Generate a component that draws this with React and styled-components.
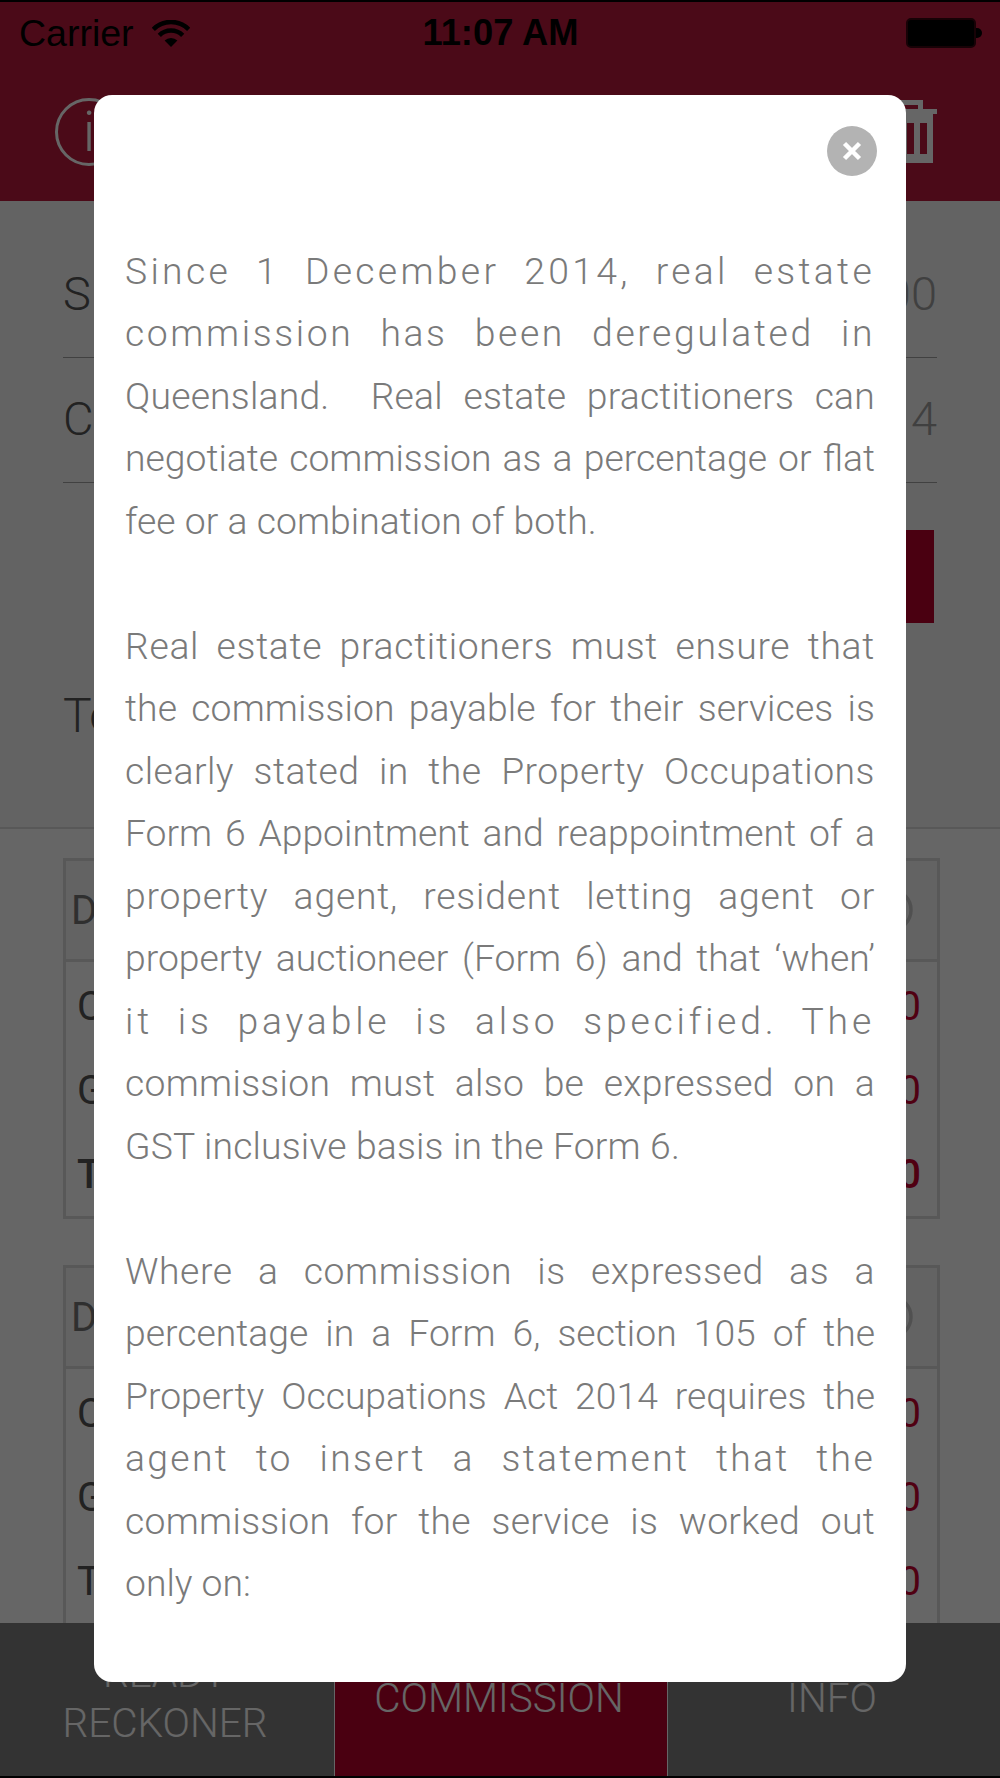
import styled, { createGlobalStyle } from 'styled-components';

const paragraphs = [
    [
        ['Since 1 December 2014, real estate', 3.3],
        ['commission has been deregulated in', 2.6],
        ['Queensland.  Real estate practitioners can', 0.2],
        ['negotiate commission as a percentage or flat', 0],
        ['fee or a combination of both.', 0.05, true],
    ],
    [
        ['Real estate practitioners must ensure that', 0.7],
        ['the commission payable for their services is', 0.1],
        ['clearly stated in the Property Occupations', 0.5],
        ['Form 6 Appointment and reappointment of a', 0],
        ['property agent, resident letting agent or', 0.8],
        ['property auctioneer (Form 6) and that ‘when’', 0],
        ['it is payable is also specified. The', 3.8],
        ['commission must also be expressed on a', 0.3],
        ['GST inclusive basis in the Form 6.', 0.17, true],
    ],
    [
        ['Where a commission is expressed as a', 0.6],
        ['percentage in a Form 6, section 105 of the', 0],
        ['Property Occupations Act 2014 requires the', 0],
        ['agent to insert a statement that the', 2.3],
        ['commission for the service is worked out', 0.3],
        ['only on:', 0, true],
    ],
];

const tableRows = [
    { label: 'C', value: '0' },
    { label: 'G', value: '0' },
    { label: 'T', value: '0', total: true },
];

export default function App() {
    return (
        <Screen>
            <GlobalStyle />
            <Header>
                <StatusBar>
                    <Carrier>
                        Carrier
                        <WifiIcon />
                    </Carrier>
                    <Clock>11:07 AM</Clock>
                    <Battery>
                        <BatteryCell />
                        <BatteryNub />
                    </Battery>
                </StatusBar>
                <Toolbar>
                    <InfoButton>i</InfoButton>
                    <TrashIcon />
                </Toolbar>
            </Header>
            <Content>
                <Form>
                    <FormRow>
                        <span>S</span>
                        <FormValue>00</FormValue>
                    </FormRow>
                    <FormRow>
                        <span>C</span>
                        <FormValue>4</FormValue>
                    </FormRow>
                    <SubmitButton />
                    <TotalRow>To</TotalRow>
                </Form>
                <Results>
                    <CostTable strongTotal />
                    <CostTable />
                </Results>
            </Content>
            <TabBar>
                <Tab>READY<br />RECKONER</Tab>
                <Tab $active>COMMISSION</Tab>
                <Tab>INFO</Tab>
            </TabBar>
            <Overlay>
                <Modal>
                    <CloseButton>
                        <svg width="20" height="20" viewBox="0 0 20 20">
                            <path d="M2.5 2.5 17.5 17.5M17.5 2.5 2.5 17.5" stroke="#fff" strokeWidth="4.5" />
                        </svg>
                    </CloseButton>
                    {paragraphs.map((lines, i) => (
                        <Paragraph key={i}>
                            {lines.map(([text, track, last]) => (
                                <Line key={text} $track={track} $last={last}>{text}</Line>
                            ))}
                        </Paragraph>
                    ))}
                </Modal>
            </Overlay>
        </Screen>
    );
}

function CostTable({ strongTotal }) {
    return (
        <Table>
            <TableHead>
                <span>D</span>
                <HeadRing />
            </TableHead>
            <TableBody>
                {tableRows.map((row) => (
                    <TableRow key={row.label} $strong={strongTotal && row.total}>
                        <span>{row.label}</span>
                        <RowValue>{row.value}</RowValue>
                    </TableRow>
                ))}
            </TableBody>
        </Table>
    );
}

function WifiIcon() {
    return (
        <WifiSvg width="38" height="27" viewBox="0 0 38 27">
            <path d="M1.3 9.3A25 25 0 0 1 36.7 9.3" fill="none" stroke="#000" strokeWidth="4.5" />
            <path d="M7.3 15.3A16.5 16.5 0 0 1 30.7 15.3" fill="none" stroke="#000" strokeWidth="4.5" />
            <path d="M19 27 12.6 20.6A9 9 0 0 1 25.4 20.6Z" fill="#000" />
        </WifiSvg>
    );
}

function TrashIcon() {
    return (
        <TrashSvg width="66" height="63" viewBox="0 0 66 63">
            <path
                fillRule="evenodd"
                fill="#fff"
                d="M14 0H52V9H66V14H62V63H4V14H0V9H14ZM19 5V9H47V5ZM10 23V54H17V23ZM23 23V54H30V23ZM36 23V54H43V23ZM49 23V54H56V23Z"
            />
        </TrashSvg>
    );
}

function HeadRing() {
    return (
        <svg width="44" height="44" viewBox="0 0 44 44">
            <circle cx="22" cy="22" r="20" fill="none" stroke="#c8c8c8" strokeWidth="3.5" />
        </svg>
    );
}

const GlobalStyle = createGlobalStyle`
    html, body {
        margin: 0;
        padding: 0;
        background: #000;
    }
`;

const Screen = styled.div`
    position: relative;
    display: flex;
    flex-direction: column;
    box-sizing: border-box;
    width: 1000px;
    height: 1778px;
    overflow: hidden;
    border-top: 2px solid #000;
    border-bottom: 2px solid #000;
    background: #fff;
    font-family: Roboto, "Liberation Sans", sans-serif;
`;

const Header = styled.header`
    flex: none;
    height: 199px;
    background: #bb1a3c;
`;

const StatusBar = styled.div`
    display: flex;
    align-items: center;
    justify-content: space-between;
    height: 62px;
    padding: 0 18px 0 19px;
    color: #000;
    font-family: "Liberation Sans", Arial, sans-serif;
`;

const Carrier = styled.div`
    display: flex;
    align-items: center;
    width: 240px;
    font-size: 37.5px;
`;

const WifiSvg = styled.svg`
    margin-left: 18px;
`;

const Clock = styled.div`
    font-size: 36.3px;
    font-weight: 700;
`;

const Battery = styled.div`
    display: flex;
    align-items: center;
    justify-content: flex-end;
    width: 240px;
`;

const BatteryCell = styled.div`
    box-sizing: border-box;
    width: 70px;
    height: 30px;
    border: 2px solid #3a0611;
    border-radius: 5px;
    background: #000;
`;

const BatteryNub = styled.div`
    width: 6px;
    height: 10px;
    border-radius: 0 5px 5px 0;
    background: #000;
`;

const Toolbar = styled.div`
    display: flex;
    align-items: center;
    justify-content: space-between;
    height: 135px;
    padding: 0 63px 0 55px;
`;

const InfoButton = styled.div`
    display: flex;
    align-items: center;
    justify-content: center;
    box-sizing: border-box;
    width: 68px;
    height: 68px;
    border: 3px solid #fff;
    border-radius: 50%;
    color: #fff;
    font-size: 56px;
    font-weight: 300;
`;

const TrashSvg = styled.svg`
    display: block;
`;

const Content = styled.main`
    flex: 1;
    min-height: 0;
    overflow: hidden;
`;

const Form = styled.section`
    display: flex;
    flex-direction: column;
    box-sizing: border-box;
    height: 628px;
    padding: 32px 63px 0;
    border-bottom: 2px solid #dcdcdc;
    background: #f8f8f8;
    color: #555;
    font-weight: 300;
`;

const FormRow = styled.div`
    display: flex;
    align-items: center;
    justify-content: space-between;
    box-sizing: border-box;
    height: 125px;
    padding-bottom: 3px;
    border-bottom: 1px solid #a4a4a4;
    font-size: 47px;
`;

const FormValue = styled.span`
    color: #a0a0a0;
`;

const SubmitButton = styled.div`
    align-self: flex-end;
    width: 500px;
    height: 93px;
    margin: 47px 3px 0 0;
    background: #b9002b;
`;

const TotalRow = styled.div`
    margin-top: 63px;
    font-size: 48px;
    line-height: 60px;
`;

const Results = styled.section`
    display: flex;
    flex-direction: column;
    gap: 46px;
    padding: 29px 60px 0 63px;
`;

const Table = styled.div`
    flex: none;
    border: 3px solid #dcdcdc;
`;

const TableHead = styled.div`
    display: flex;
    align-items: center;
    justify-content: space-between;
    box-sizing: border-box;
    height: 101px;
    padding: 0 24px 0 5px;
    border-bottom: 3px solid #dcdcdc;
    background: #f8f8f8;
    color: #777;
    font-size: 40px;
`;

const TableBody = styled.div`
    padding-top: 2px;
`;

const TableRow = styled.div`
    display: flex;
    align-items: center;
    justify-content: space-between;
    height: 84px;
    padding: 0 16px 0 11px;
    color: #555;
    font-size: 40px;
    font-weight: ${(p) => (p.$strong ? 500 : 400)};
`;

const RowValue = styled.span`
    color: #c8002f;
`;

const TabBar = styled.nav`
    flex: none;
    display: grid;
    grid-template-columns: 334px 334px 332px;
    height: 153px;
    background: #808080;
`;

const Tab = styled.div`
    display: flex;
    align-items: center;
    justify-content: center;
    box-sizing: border-box;
    padding: 0 4px 4px 0;
    border-left: 1px solid ${(p) => (p.$active ? '#fff' : 'transparent')};
    border-right: 1px solid ${(p) => (p.$active ? '#fff' : 'transparent')};
    background: ${(p) => (p.$active ? '#b9002b' : 'transparent')};
    color: #fff;
    font-size: 40.5px;
    font-weight: 300;
    line-height: 50px;
    text-align: center;
`;

const Overlay = styled.div`
    position: absolute;
    inset: 0;
    display: flex;
    justify-content: center;
    align-items: flex-start;
    padding-top: 93px;
    background: rgba(0, 0, 0, 0.6);
`;

const Modal = styled.div`
    position: relative;
    box-sizing: border-box;
    width: 812px;
    height: 1587px;
    padding: 144.5px 31px 0;
    overflow: hidden;
    border-radius: 18px;
    background: #fff;
    color: #7a7a7a;
    font-size: 37.3px;
    font-weight: 300;
    line-height: 62.5px;
`;

const CloseButton = styled.div`
    position: absolute;
    top: 31px;
    right: 29px;
    display: flex;
    align-items: center;
    justify-content: center;
    width: 50px;
    height: 50px;
    border-radius: 50%;
    background: #b3b3b3;
`;

const Paragraph = styled.div`
    margin-bottom: 62.5px;
`;

const Line = styled.div`
    letter-spacing: ${(p) => p.$track}px;
    text-align: ${(p) => (p.$last ? 'left' : 'justify')};
    text-align-last: ${(p) => (p.$last ? 'left' : 'justify')};
    white-space: pre-wrap;
`;
